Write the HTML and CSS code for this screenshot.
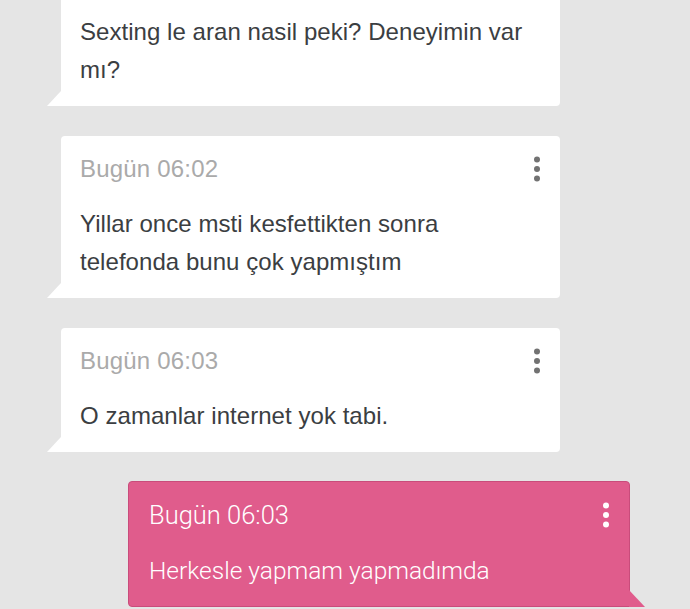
FILE: index.html
```html
<!DOCTYPE html>
<html lang="tr">

<head>
    <meta charset="UTF-8">
    <meta name="viewport" content="width=device-width, initial-scale=1.0">
    <title>Mesajlar</title>
    <link rel="stylesheet" href="styles.css">
</head>

<body>
    <div class="thread">
        <div class="msg in">
            <p class="body">Sexting le aran nasil peki? Deneyimin var<br>mı?</p>
        </div>

        <div class="msg in">
            <div class="head">
                <span class="time">Bugün 06:02</span>
                <svg class="more" width="8" height="26" viewBox="0 0 8 26"><circle cx="4" cy="3.5" r="3"/><circle cx="4" cy="13" r="3"/><circle cx="4" cy="22.5" r="3"/></svg>
            </div>
            <p class="body">Yillar once msti kesfettikten sonra<br>telefonda bunu çok yapmıştım</p>
        </div>

        <div class="msg in">
            <div class="head">
                <span class="time">Bugün 06:03</span>
                <svg class="more" width="8" height="26" viewBox="0 0 8 26"><circle cx="4" cy="3.5" r="3"/><circle cx="4" cy="13" r="3"/><circle cx="4" cy="22.5" r="3"/></svg>
            </div>
            <p class="body">O zamanlar internet yok tabi.</p>
        </div>

        <div class="msg out">
            <div class="head">
                <span class="time">Bugün 06:03</span>
                <svg class="more" width="8" height="26" viewBox="0 0 8 26"><circle cx="4" cy="3.5" r="3"/><circle cx="4" cy="13" r="3"/><circle cx="4" cy="22.5" r="3"/></svg>
            </div>
            <p class="body">Herkesle yapmam yapmadımda</p>
        </div>
    </div>
</body>

</html>
```

FILE: styles.css
```css
* {
    padding: 0;
    margin: 0;
    box-sizing: border-box;
}

body {
    background: #e5e5e5;
    font-family: 'Liberation Sans', Arial, sans-serif;
    overflow: hidden;
}

.thread {
    display: flex;
    flex-direction: column;
    gap: 30px;
    margin-top: -4px;
}

.msg {
    position: relative;
    border-radius: 4px;
    padding: 17px 19px 17px;
}

.msg.in {
    background: #fff;
    color: #3b3e42;
    margin-left: 61px;
    width: 499px;
    border-bottom-left-radius: 0;
}

.msg.in::after {
    content: "";
    position: absolute;
    left: -14px;
    bottom: 0;
    width: 14px;
    height: 15px;
    background: #fff;
    clip-path: polygon(100% 0, 100% 100%, 0 100%);
}

.msg.out {
    background: #e05c8c;
    border: 1px solid #c94c7b;
    color: #fff;
    margin-top: -1px;
    margin-left: 128px;
    width: 502px;
    font-family: Roboto, sans-serif;
    font-weight: 300;
    padding: 17px 19px 16px 20px;
    border-bottom-right-radius: 0;
}

.msg.out::after {
    content: "";
    position: absolute;
    right: -16px;
    bottom: -1px;
    width: 16px;
    height: 17px;
    background: #e05c8c;
    clip-path: polygon(0 0, 100% 100%, 0 100%);
}

.head {
    display: flex;
    justify-content: space-between;
    align-items: center;
    height: 32px;
    margin-bottom: 20px;
}

.out .head {
    margin-bottom: 21px;
}

.time {
    font-size: 24px;
    color: #aaaaaa;
    letter-spacing: 0.2px;
}

.out .time {
    color: #fff;
    font-size: 25.5px;
    letter-spacing: 0;
}

.more {
    fill: #727272;
}

.out .more {
    fill: #fff;
}

.body {
    font-size: 24px;
    line-height: 38px;
    letter-spacing: 0.05px;
}

.out .body {
    font-size: 24.5px;
    letter-spacing: 0;
}
```
